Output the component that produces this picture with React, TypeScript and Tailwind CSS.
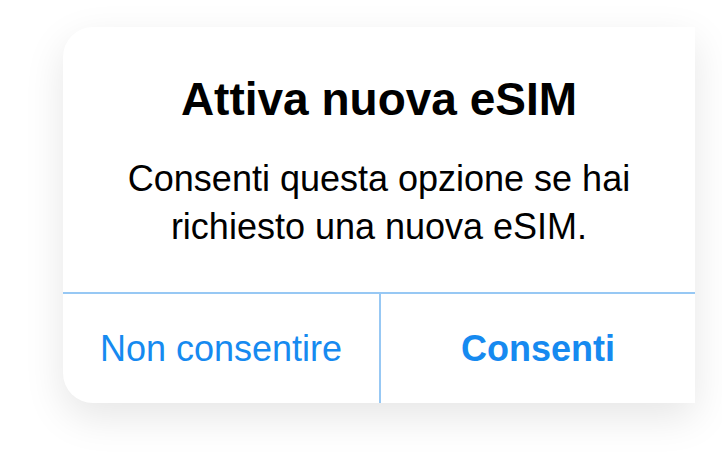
export default function App() {
  return (
    <div className="w-[722px] h-[467px] overflow-hidden bg-white pt-[27px] pl-[63px] font-['Liberation_Sans',Arial,sans-serif]">
      <div className="w-[632px] h-[376px] bg-white rounded-l-[30px] shadow-[0_14px_40px_rgba(0,0,0,0.1)] flex flex-col">
        <div className="h-[265px] flex flex-col items-center pt-[49px]">
          <div className="text-[46px] leading-[46px] font-bold text-black">Attiva nuova eSIM</div>
          <div className="mt-[33px] text-[36px] leading-[48px] text-black text-center">
            Consenti questa opzione se hai
            <br />
            richiesto una nuova eSIM.
          </div>
        </div>
        <div className="h-[2px] bg-[#97c8f4]" />
        <div className="flex-1 flex">
          <button className="w-[316px] flex items-center justify-center text-[36px] text-[#168af0]">
            Non consentire
          </button>
          <div className="w-[2px] bg-[#97c8f4]" />
          <button className="flex-1 flex items-center justify-center text-[36px] font-bold text-[#168af0]">
            Consenti
          </button>
        </div>
      </div>
    </div>
  );
}
